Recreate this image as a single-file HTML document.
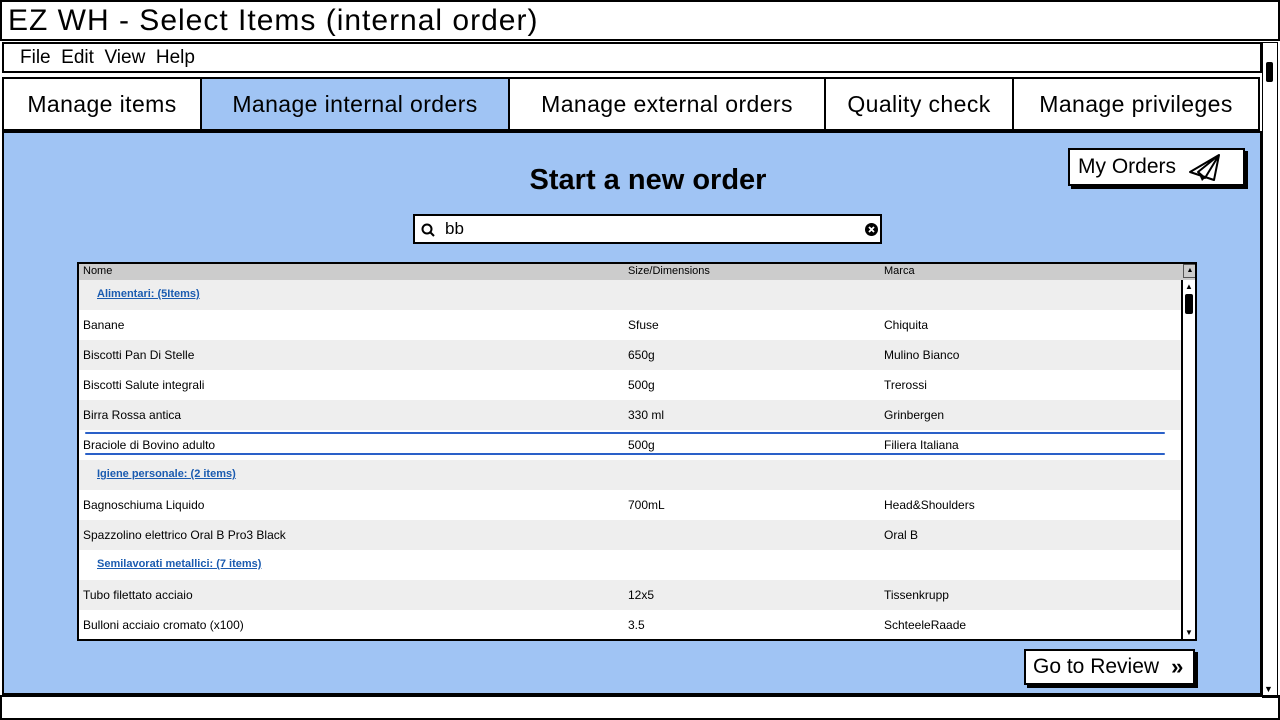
<!DOCTYPE html><html><head><style>
*{box-sizing:border-box;margin:0;padding:0}
body{width:1280px;height:720px;background:#fff;font-family:"Liberation Sans",sans-serif;position:relative;overflow:hidden;color:#000}
.a{position:absolute}
.b{border:2px solid #000}
.tab{position:absolute;top:77px;height:54px;border:2px solid #000;font-size:23px;letter-spacing:0.4px;display:flex;align-items:center;justify-content:center;background:#fff}
.row{position:absolute;left:0;width:1102px;height:30px;font-size:12px}
.row span{position:absolute;top:8px}
.g{background:#eee}
.cat{color:#1a5bb0;text-decoration:underline;font-weight:bold;font-size:11px}
.btn{background:#fff;border:2px solid #000;box-shadow:3px 3px 0 #000;display:flex;align-items:center;font-size:21px}
</style></head><body>
<div class="a b" style="left:0;top:0;width:1280px;height:41px;font-size:30px;letter-spacing:1px;padding:2px 0 0 6px">EZ WH - Select Items (internal order)</div>
<div class="a b" style="left:2px;top:42px;width:1260px;height:31px;font-size:19px;padding:3px 0 0 16px;word-spacing:0">File&nbsp;&nbsp;Edit&nbsp;&nbsp;View&nbsp;&nbsp;Help</div>
<div class="a" style="left:1262px;top:42px;width:16px;height:656px;border:1px solid #000;background:#fff"></div>
<div class="a" style="left:1266px;top:62px;width:7px;height:20px;background:#000;border-radius:2px"></div>
<div class="a" style="left:1264px;top:684px;font-size:9px">▼</div>
<div class="a b" style="left:2px;top:131px;width:1260px;height:564px;background:#a0c4f4"></div>
<div class="tab" style="left:2px;width:200px">Manage items</div>
<div class="tab" style="left:200px;width:310px;background:#a0c4f4">Manage internal orders</div>
<div class="tab" style="left:508px;width:318px">Manage external orders</div>
<div class="tab" style="left:824px;width:190px">Quality check</div>
<div class="tab" style="left:1012px;width:248px">Manage privileges</div>
<div class="a b" style="left:0;top:695px;width:1280px;height:25px"></div>
<div class="a" style="left:0;top:164px;width:1296px;text-align:center;font-size:29px;font-weight:bold">Start a new order</div>
<div class="a b" style="left:413px;top:214px;width:469px;height:30px;background:#fff;font-size:17px;padding:3px 0 0 30px">bb
<svg class="a" style="left:6px;top:7px" width="14" height="14"><circle cx="6" cy="6" r="4.5" stroke="#000" stroke-width="2" fill="none"/><line x1="9" y1="9" x2="13" y2="13" stroke="#000" stroke-width="2"/></svg>
<svg class="a" style="left:449px;top:6px" width="15" height="15"><circle cx="7.5" cy="7.5" r="6.5" fill="#000"/><path d="M5 5l5 5M10 5l-5 5" stroke="#fff" stroke-width="1.8"/></svg></div>
<div class="btn a" style="left:1068px;top:148px;width:177px;height:38px;padding-left:8px">My Orders
<svg style="margin-left:12px" width="34" height="30" viewBox="0 0 34 30"><path d="M2 20L31 3 26 28z M10 20l21-17-14 23z" stroke="#000" stroke-width="2" fill="none" stroke-linejoin="round"/><path d="M10 20l4 9 3-3z" fill="#000"/></svg></div>
<div class="btn a" style="left:1024px;top:649px;width:171px;height:36px;padding-left:7px">Go to Review<span style="margin-left:12px;font-weight:bold;font-size:22px;letter-spacing:-5px">»</span></div>
<div class="a b" style="left:77px;top:262px;width:1120px;height:379px;background:#fff;overflow:hidden">
<div class="a" style="left:0;top:0;width:1118px;height:16px;background:#ccc;font-size:11px"><span class="a" style="left:4px;top:1px">Nome</span><span class="a" style="left:549px;top:1px">Size/Dimensions</span><span class="a" style="left:805px;top:1px">Marca</span></div>
<div class="row g" style="top:16px"><span class="cat" style="left:18px">Alimentari: (5Items)</span></div>
<div class="row" style="top:46px"><span style="left:4px">Banane</span><span style="left:549px">Sfuse</span><span style="left:805px">Chiquita</span></div>
<div class="row g" style="top:76px"><span style="left:4px">Biscotti Pan Di Stelle</span><span style="left:549px">650g</span><span style="left:805px">Mulino Bianco</span></div>
<div class="row" style="top:106px"><span style="left:4px">Biscotti Salute integrali</span><span style="left:549px">500g</span><span style="left:805px">Trerossi</span></div>
<div class="row g" style="top:136px"><span style="left:4px">Birra Rossa antica</span><span style="left:549px">330 ml</span><span style="left:805px">Grinbergen</span></div>
<div class="row" style="top:166px"><span style="left:4px">Braciole di Bovino adulto</span><span style="left:549px">500g</span><span style="left:805px">Filiera Italiana</span></div>
<div class="a" style="left:6px;top:168px;width:1080px;height:2px;background:#2a60c8;border-radius:1px"></div>
<div class="a" style="left:6px;top:189px;width:1080px;height:2px;background:#2a60c8;border-radius:1px"></div>
<div class="row g" style="top:196px"><span class="cat" style="left:18px">Igiene personale: (2 items)</span></div>
<div class="row" style="top:226px"><span style="left:4px">Bagnoschiuma Liquido</span><span style="left:549px">700mL</span><span style="left:805px">Head&amp;Shoulders</span></div>
<div class="row g" style="top:256px"><span style="left:4px">Spazzolino elettrico Oral B Pro3 Black</span><span style="left:805px">Oral B</span></div>
<div class="row" style="top:286px"><span class="cat" style="left:18px">Semilavorati metallici: (7 items)</span></div>
<div class="row g" style="top:316px"><span style="left:4px">Tubo filettato acciaio</span><span style="left:549px">12x5</span><span style="left:805px">Tissenkrupp</span></div>
<div class="row" style="top:346px"><span style="left:4px">Bulloni acciaio cromato (x100)</span><span style="left:549px">3.5</span><span style="left:805px">SchteeleRaade</span></div>
<div class="a" style="left:1102px;top:16px;width:16px;height:362px;border-left:2px solid #000;background:#fff"></div>
<div class="a" style="left:1104px;top:0;width:14px;height:14px;border:1px solid #555;font-size:7px;text-align:center;line-height:12px">▲</div>
<div class="a" style="left:1106px;top:18px;width:9px;height:9px;font-size:8px">▲</div>
<div class="a" style="left:1106px;top:30px;width:8px;height:20px;background:#000;border-radius:2px"></div>
<div class="a" style="left:1106px;top:364px;font-size:8px">▼</div>
</div>
</body></html>
